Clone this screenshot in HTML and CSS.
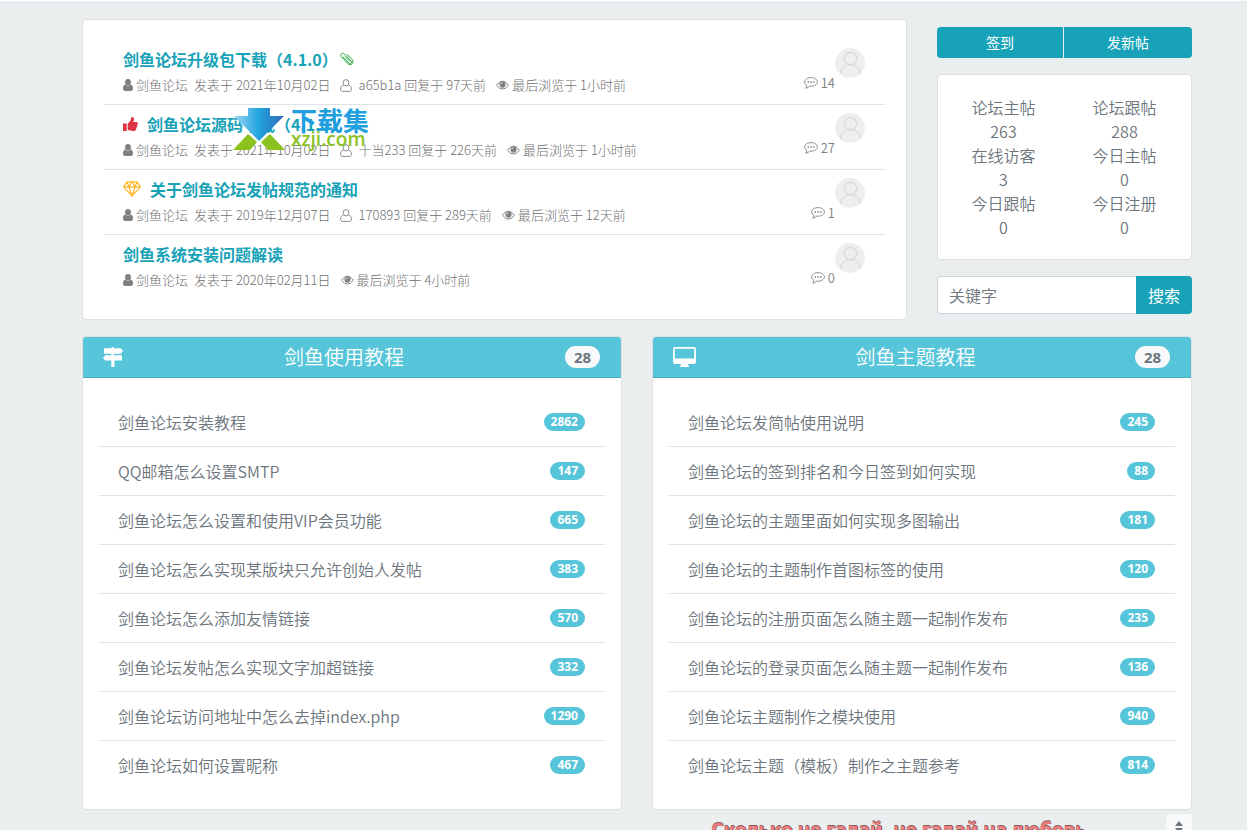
FILE: index.html
```html
<!DOCTYPE html>
<html lang="zh-CN">
<head>
<meta charset="utf-8">
<title>剑鱼论坛</title>
<link rel="stylesheet" href="styles.css">
</head>
<body>
<svg class="sprite" aria-hidden="true">
  <symbol id="user" viewBox="0 0 10 12"><path d="M5 0a2.9 3.2 0 0 1 0 6.4A2.9 3.2 0 0 1 5 0zM2.2 5.6C.7 5.8 0 7.4 0 9.600C0 11.300.8 12 2 12h6c1.200 0 2-.7 2-2.400C10 7.400 9.300 5.800 7.800 5.600A4 4 0 0 1 2.200 5.600z"/></symbol>
  <symbol id="user-o" viewBox="0 0 12 13"><path d="M6 .6a2.900 3.200 0 0 1 0 6.400A2.900 3.200 0 0 1 6 .6zM3.200 6.200C1.400 6.500.6 8.200.6 10.300c0 1.400.8 2.100 1.900 2.100h7c1.100 0 1.900-.7 1.900-2.100 0-2.100-.8-3.800-2.600-4.100" fill="none" stroke="currentColor" stroke-width=".9"/></symbol>
  <symbol id="eye" viewBox="0 0 13 10"><path d="M.5 5.200Q6.500-3 12.500 5.200Q6.500 13 .5 5.200z" fill="none" stroke="currentColor"/><circle cx="6.500" cy="4.600" r="3.100"/><path d="M4.700 4.400A1.900 1.900 0 0 1 6.500 2.600" fill="none" stroke="#fff" stroke-width=".7"/></symbol>
  <symbol id="comment" viewBox="0 0 14 12"><path d="M7 .6c3.500 0 6.400 1.900 6.400 4.300S10.500 9.200 7 9.200l-1.300-.1C4.600 10.300 3.300 11 1.600 11.200c.8-.7 1.200-1.500 1.300-2.700C1.500 7.700.6 6.400.6 4.900.6 2.500 3.500.6 7 .6z" fill="none" stroke="currentColor" stroke-width=".9"/><path d="M3.500 4.200h1.500v1.500H3.500zM6.300 4.200h1.500v1.500H6.300zM9.100 4.200h1.500v1.500H9.100z"/></symbol>
  <symbol id="avatar" viewBox="0 0 30 30"><circle cx="15" cy="15" r="15" fill="#eee"/><g fill="none" stroke="#d8d8d8" stroke-width="1.300"><circle cx="15.500" cy="10.500" r="6.200"/><path d="M5.500 25.500C6 20 10 16.600 15.500 16.600S25 20 25.500 25.500"/></g></symbol>
  <symbol id="clip" viewBox="0 0 14 14"><path d="M3.200 5.200l5.600 5.900c1.700 1.500 3.700-.4 2.300-2.200L4.300 1.900C2.300.1-.4 2.600 1.300 4.700l6.600 7c2.600 2.600 6.700-.7 4.500-3.900L7.300 2.500M5.300 4.600l4.500 4.800" fill="none" stroke="currentColor" stroke-width="1" stroke-linecap="round"/></symbol>
  <symbol id="thumb" viewBox="0 0 15 14"><path d="M0 6.500h3.700V14H0zM4.700 6.500C6.800 5.200 7.600 3.500 8 1.500 8.200.4 8.600 0 9.200 0c2 0 2.300 2.200 1.100 5h2.900c1.200 0 1.900.8 1.700 1.800-.1.500-.4.800-.7 1 .4 1 .1 1.700-.6 2.200.2.900 0 1.500-.6 2 .1 1.300-.8 2-2.500 2-2.400 0-4-.9-5.800-1z"/></symbol>
  <symbol id="gem" viewBox="0 0 18 16"><path d="M4 .8h10l3.300 5L9 15.200.7 5.800zM.7 5.800h16.600M4 .8l1.800 5L9 15.200l3.200-9.400L14 .8M5.800 5.800L9 .8l3.200 5" fill="none" stroke="currentColor" stroke-width="1.200" stroke-linejoin="round"/></symbol>
  <symbol id="signs" viewBox="0 0 20 20"><path d="M8.300 1.300Q8.300 0 9.700 0T11 1.300h6.800L20 4l-2.200 2.700H11v1.500h7.400q.6 0 .6.600v4.100q0 .6-.6.6H11.500V20H8.300v-6.500H2.200L0 10.900l2.200-2.700h6.100V6.700H1.600Q1 6.700 1 6.100V1.900q0-.6.6-.6z"/></symbol>
  <symbol id="screen" viewBox="0 0 23 20"><path fill-rule="evenodd" d="M2 0h19q2 0 2 2v13q0 2-2 2h-6q0 1.500 1 2v1H7v-1q1-.5 1-2H2q-2 0-2-2V2Q0 0 2 0zM1.800 1.800V11.500H21.200V1.800z"/></symbol>
  <symbol id="mark" viewBox="0 0 52 42"><defs><linearGradient id="blue"><stop offset="0" stop-color="#9bd8f3"/><stop offset=".5" stop-color="#20a3df"/><stop offset="1" stop-color="#3467b5"/></linearGradient></defs><path d="M15 0h22v8h14L26 33 1 8h14z" fill="url(#blue)"/><path d="M0 42L15 26l9 8-7 8zM52 42L37 26l-9 8 7 8z" fill="#8bc21f"/></symbol>
</svg>
<div class="topbar"></div>
<div class="page">
  <div class="top">
    <main class="card threads">
      <ul class="list">
        <li class="thread">
          <div class="info">
            <h2 class="title"><a href="#">剑鱼论坛升级包下载（4.1.0）</a><svg class="clip"><use href="#clip"/></svg></h2>
            <p class="meta"><svg class="i-user"><use href="#user"/></svg><span>剑鱼论坛</span><span class="date">发表于 2021年10月02日</span><svg class="i-user-o"><use href="#user-o"/></svg><span class="reply">a65b1a 回复于 97天前</span><svg class="i-eye"><use href="#eye"/></svg><span>最后浏览于 1小时前</span></p>
          </div>
          <span class="count"><svg class="i-comment"><use href="#comment"/></svg>14</span><svg class="avatar"><use href="#avatar"/></svg>
        </li>
        <li class="thread">
          <div class="info">
            <h2 class="title"><svg class="thumb"><use href="#thumb"/></svg><a href="#">剑鱼论坛源码下载（4.1.0）</a></h2>
            <p class="meta"><svg class="i-user"><use href="#user"/></svg><span>剑鱼论坛</span><span class="date">发表于 2021年10月02日</span><svg class="i-user-o"><use href="#user-o"/></svg><span class="reply">十当233 回复于 226天前</span><svg class="i-eye"><use href="#eye"/></svg><span>最后浏览于 1小时前</span></p>
          </div>
          <span class="count"><svg class="i-comment"><use href="#comment"/></svg>27</span><svg class="avatar"><use href="#avatar"/></svg>
        </li>
        <li class="thread">
          <div class="info">
            <h2 class="title"><svg class="gem"><use href="#gem"/></svg><a href="#">关于剑鱼论坛发帖规范的通知</a></h2>
            <p class="meta"><svg class="i-user"><use href="#user"/></svg><span>剑鱼论坛</span><span class="date">发表于 2019年12月07日</span><svg class="i-user-o"><use href="#user-o"/></svg><span class="reply">170893 回复于 289天前</span><svg class="i-eye"><use href="#eye"/></svg><span>最后浏览于 12天前</span></p>
          </div>
          <span class="count"><svg class="i-comment"><use href="#comment"/></svg>1</span><svg class="avatar"><use href="#avatar"/></svg>
        </li>
        <li class="thread">
          <div class="info">
            <h2 class="title"><a href="#">剑鱼系统安装问题解读</a></h2>
            <p class="meta"><svg class="i-user"><use href="#user"/></svg><span>剑鱼论坛</span><span class="date">发表于 2020年02月11日</span><svg class="i-eye"><use href="#eye"/></svg><span>最后浏览于 4小时前</span></p>
          </div>
          <span class="count"><svg class="i-comment"><use href="#comment"/></svg>0</span><svg class="avatar"><use href="#avatar"/></svg>
        </li>
      </ul>
      <div class="watermark"><svg class="mark"><use href="#mark"/></svg><div><div class="wm-name">下载集</div><div class="wm-site">xzji.com</div></div></div>
    </main>
    <aside class="side">
      <div class="actions"><button type="button">签到</button><button type="button">发新帖</button></div>
      <dl class="card stats">
        <div><dt>论坛主帖</dt><dd>263</dd></div>
        <div><dt>论坛跟帖</dt><dd>288</dd></div>
        <div><dt>在线访客</dt><dd>3</dd></div>
        <div><dt>今日主帖</dt><dd>0</dd></div>
        <div><dt>今日跟帖</dt><dd>0</dd></div>
        <div><dt>今日注册</dt><dd>0</dd></div>
      </dl>
      <form class="search"><input type="text" placeholder="关键字" aria-label="关键字"><button type="button">搜索</button></form>
    </aside>
  </div>
  <div class="boards">
    <section class="card">
      <header class="head"><svg class="i-signs"><use href="#signs"/></svg><h2>剑鱼使用教程</h2><span class="total">28</span></header>
      <ul class="list topics">
        <li><a href="#">剑鱼论坛安装教程</a><span class="badge">2862</span></li>
        <li><a href="#">QQ邮箱怎么设置SMTP</a><span class="badge">147</span></li>
        <li><a href="#">剑鱼论坛怎么设置和使用VIP会员功能</a><span class="badge">665</span></li>
        <li><a href="#">剑鱼论坛怎么实现某版块只允许创始人发帖</a><span class="badge">383</span></li>
        <li><a href="#">剑鱼论坛怎么添加友情链接</a><span class="badge">570</span></li>
        <li><a href="#">剑鱼论坛发帖怎么实现文字加超链接</a><span class="badge">332</span></li>
        <li><a href="#">剑鱼论坛访问地址中怎么去掉index.php</a><span class="badge">1290</span></li>
        <li><a href="#">剑鱼论坛如何设置昵称</a><span class="badge">467</span></li>
      </ul>
    </section>
    <section class="card">
      <header class="head"><svg class="i-screen"><use href="#screen"/></svg><h2>剑鱼主题教程</h2><span class="total">28</span></header>
      <ul class="list topics">
        <li><a href="#">剑鱼论坛发简帖使用说明</a><span class="badge">245</span></li>
        <li><a href="#">剑鱼论坛的签到排名和今日签到如何实现</a><span class="badge">88</span></li>
        <li><a href="#">剑鱼论坛的主题里面如何实现多图输出</a><span class="badge">181</span></li>
        <li><a href="#">剑鱼论坛的主题制作首图标签的使用</a><span class="badge">120</span></li>
        <li><a href="#">剑鱼论坛的注册页面怎么随主题一起制作发布</a><span class="badge">235</span></li>
        <li><a href="#">剑鱼论坛的登录页面怎么随主题一起制作发布</a><span class="badge">136</span></li>
        <li><a href="#">剑鱼论坛主题制作之模块使用</a><span class="badge">940</span></li>
        <li><a href="#">剑鱼论坛主题（模板）制作之主题参考</a><span class="badge">814</span></li>
      </ul>
    </section>
  </div>
  <footer class="foot">
    <p class="lyric">Сколько не гадай, не гадай на любовь</p>
    <button type="button" class="jump" aria-label="滚动"><svg viewBox="0 0 8 12"><path d="M0 5L4 0l4 5zM0 7l4 5 4-5z"/></svg></button>
  </footer>
</div>
</body>
</html>
```
FILE: styles.css
```css
* { box-sizing: border-box; }
html, body { height: 100%; }
body {
  margin: 0;
  overflow: hidden;
  background: #eaeeef;
  color: #6c757d;
  font: 350 16px/24px "Noto Sans CJK SC", "Open Sans", sans-serif;
}
h2, p, ul, dl, dd { margin: 0; padding: 0; }
a { color: inherit; text-decoration: none; }
button, input { font: inherit; border: 0; margin: 0; }
svg { fill: currentColor; flex: none; }
.sprite { position: absolute; width: 0; height: 0; }
.topbar { height: 3px; background: #f8f9fa; border-bottom: 1px solid #dee2e6; }
.page { padding: 16px 55px 0 82px; }
.card { background: #fff; border: 1px solid #dfdfdf; border-radius: 4px; }
.list { list-style: none; }
.list li { display: flex; }
.list li + li { border-top: 1px solid #dee2e6; }

.top { display: grid; grid-template-columns: minmax(0, 1fr) 255px; gap: 30px; align-items: start; }
.threads { position: relative; padding: 20px 21px; }
.thread { padding: 7px 20px 10px 19px; }
.info { flex: 1; }
.title { display: flex; align-items: center; color: #17a2b8; font-size: 16px; line-height: 24px; font-weight: 700; }
.meta { display: flex; align-items: center; margin-top: 5px; color: #707070; font-size: 13px; line-height: 18px; font-weight: 300; white-space: pre; }
.meta svg { color: #808080; }
.date { margin-left: 6px; }
.i-user { width: 10px; height: 12px; margin-right: 3px; }
.i-user-o { width: 12px; height: 13px; margin: 0 7px 0 9px; }
.i-eye { width: 13px; height: 10px; margin: 0 3px 0 10px; }
.i-comment { width: 14px; height: 12px; margin-right: 3px; }
.clip { width: 14px; height: 14px; margin-left: 2px; color: #28a745; }
.thumb { width: 15px; height: 14px; margin-right: 9px; color: #dc3545; }
.gem { width: 18px; height: 16px; margin-right: 9px; color: #ffb72b; }
.count { display: flex; align-items: center; height: 18px; margin-top: 27px; color: #808080; font-size: 13px; }
.avatar { width: 30px; height: 30px; margin-top: 1px; }

.watermark { position: absolute; left: 150px; top: 88px; display: flex; gap: 6px; }
.mark { width: 52px; height: 42px; }
.wm-name { color: #1f9fdf; font-size: 26px; line-height: 24px; font-weight: 700; }
.wm-site { color: #8bc21f; font: 600 19px/14px "Open Sans", sans-serif; }

.side { display: grid; gap: 16px; padding-top: 8px; }
.actions { display: grid; grid-template-columns: 126px 1fr; gap: 1px; border-radius: 4px; overflow: hidden; }
.actions button { padding: 5px 8px; background: #17a2b8; color: #fff; font-size: 14px; line-height: 21px; font-weight: 400; }
.stats { display: grid; grid-template-columns: 1fr 1fr; padding: 20px 6px 20px 5px; text-align: center; }
.search { display: flex; }
.search input { flex: 1; min-width: 0; height: 38px; padding: 6px 11px; background: #fff; border: 1px solid #ced4da; border-right: 0; border-radius: 4px 0 0 4px; }
.search input::placeholder { color: #6c757d; opacity: 1; }
.search button { width: 56px; padding: 0; background: #17a2b8; color: #fff; font-weight: 400; border-radius: 0 4px 4px 0; }

.boards { display: grid; grid-template-columns: 1fr 1fr; gap: 30px; margin-top: 16px; }
.head { display: flex; align-items: center; height: 41px; padding: 0 21px 0 20px; background: #57c5d9; color: #fff; border-bottom: 1px solid #4aafc1; border-radius: 3px 3px 0 0; }
.head h2 { flex: 1; text-align: center; font-size: 20px; font-weight: 350; }
.i-signs { width: 20px; height: 20px; }
.i-screen { width: 23px; height: 20px; }
.total { min-width: 35px; border-radius: 11px; background: #f8f9fa; color: #6c757d; font: 700 15px/22px "Noto Sans", sans-serif; text-align: center; }
.topics { padding: 20px 16px; }
.topics li { align-items: center; justify-content: space-between; padding: 12px 20px 12px 19px; }
.badge { padding: 0 7px; border-radius: 9px; background: #57c5d9; color: #fff; font: 700 12px/18px "Noto Sans", sans-serif; }

.foot { display: flex; justify-content: flex-end; align-items: flex-start; margin-top: 4px; }
.lyric { margin: 4px 80px 0 0; color: #f08080; font: 700 19px/24px "Noto Sans", sans-serif; text-shadow: 1px 0 #7a4a4a, 0 -1px #8a5a5a; white-space: nowrap; }
.jump { display: flex; justify-content: center; align-items: flex-start; width: 26px; height: 28px; padding: 7px 0 0; background: #f8f9fa; color: #6c757d; border-radius: 4px 0 0 0; }
.jump svg { width: 8px; height: 12px; }
```
